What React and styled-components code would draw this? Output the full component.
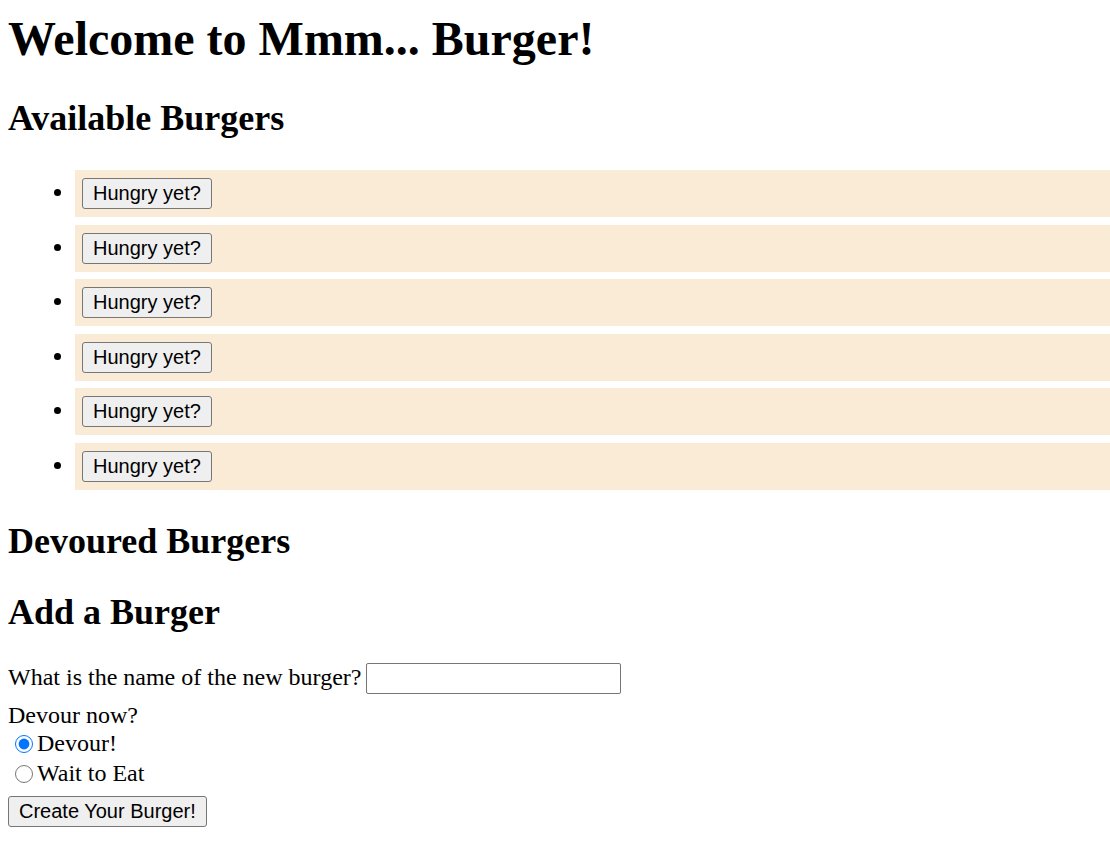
import React from "react";
import styled, { createGlobalStyle } from "styled-components";

const GlobalStyle = createGlobalStyle`
  body {
    margin: 0;
    background: #fff;
    color: #000;
    font-family: "Liberation Serif", "Times New Roman", serif;
    font-size: 24px;
  }
`;

const Page = styled.div`
  display: flow-root;
  padding: 0 8px 30px 8px;
`;

const Title = styled.h1`
  font-size: 48px;
  font-weight: bold;
  line-height: 55px;
  margin: 11px 0 0 0;
`;

const SectionTitle = styled.h2`
  font-size: 36px;
  font-weight: bold;
  line-height: 41px;
  margin: ${(p) => p.top}px 0 0 0;
`;

const BurgerList = styled.ul`
  list-style: disc;
  margin: 31px -8px 0 0;
  padding-left: 67px;
`;

const BurgerItem = styled.li`
  background: #faebd7;
  padding: 8px 7px;
  margin-bottom: 7.6px;

  &:last-child {
    margin-bottom: 0;
  }
`;

const Button = styled.button`
  box-sizing: border-box;
  height: 31px;
  font-family: "Liberation Sans", Arial, sans-serif;
  font-size: 20px;
  line-height: 23px;
  color: #000;
  background: #efefef;
  border: 1px solid #767676;
  border-radius: 3px;
  padding: 3px 10px;
  margin: 0;
  cursor: pointer;
`;

const Form = styled.form`
  margin-top: 30px;
`;

const FormLine = styled.div`
  margin-top: ${(p) => p.top || 0}px;
`;

const TextInput = styled.input`
  box-sizing: border-box;
  width: 255px;
  height: 31px;
  margin: 0 0 0 5px;
  padding: 1px 3px;
  font-family: "Liberation Sans", Arial, sans-serif;
  font-size: 20px;
  border: 1px solid #767676;
  border-radius: 2px;
  background: #fff;
`;

const RadioLabel = styled.label`
  display: flex;
  align-items: center;
  height: 30px;
`;

const Radio = styled.input`
  width: 18px;
  height: 18px;
  margin: 0 4px 0 7px;
  accent-color: #0075ff;
`;

const burgers = Array.from({ length: 6 }, (_, i) => i);

export default function App() {
  return (
    <Page>
      <GlobalStyle />
      <Title>Welcome to Mmm... Burger!</Title>

      <SectionTitle top={32}>Available Burgers</SectionTitle>
      <BurgerList>
        {burgers.map((id) => (
          <BurgerItem key={id}>
            <Button type="button">Hungry yet?</Button>
          </BurgerItem>
        ))}
      </BurgerList>

      <SectionTitle top={31}>Devoured Burgers</SectionTitle>

      <SectionTitle top={30}>Add a Burger</SectionTitle>
      <Form onSubmit={(e) => e.preventDefault()}>
        <FormLine>
          What is the name of the new burger?
          <TextInput type="text" name="burger" />
        </FormLine>
        <FormLine top={8}>Devour now?</FormLine>
        <RadioLabel>
          <Radio type="radio" name="devoured" value="1" defaultChecked />
          Devour!
        </RadioLabel>
        <RadioLabel>
          <Radio type="radio" name="devoured" value="0" />
          Wait to Eat
        </RadioLabel>
        <FormLine top={7}>
          <Button type="submit">Create Your Burger!</Button>
        </FormLine>
      </Form>
    </Page>
  );
}
